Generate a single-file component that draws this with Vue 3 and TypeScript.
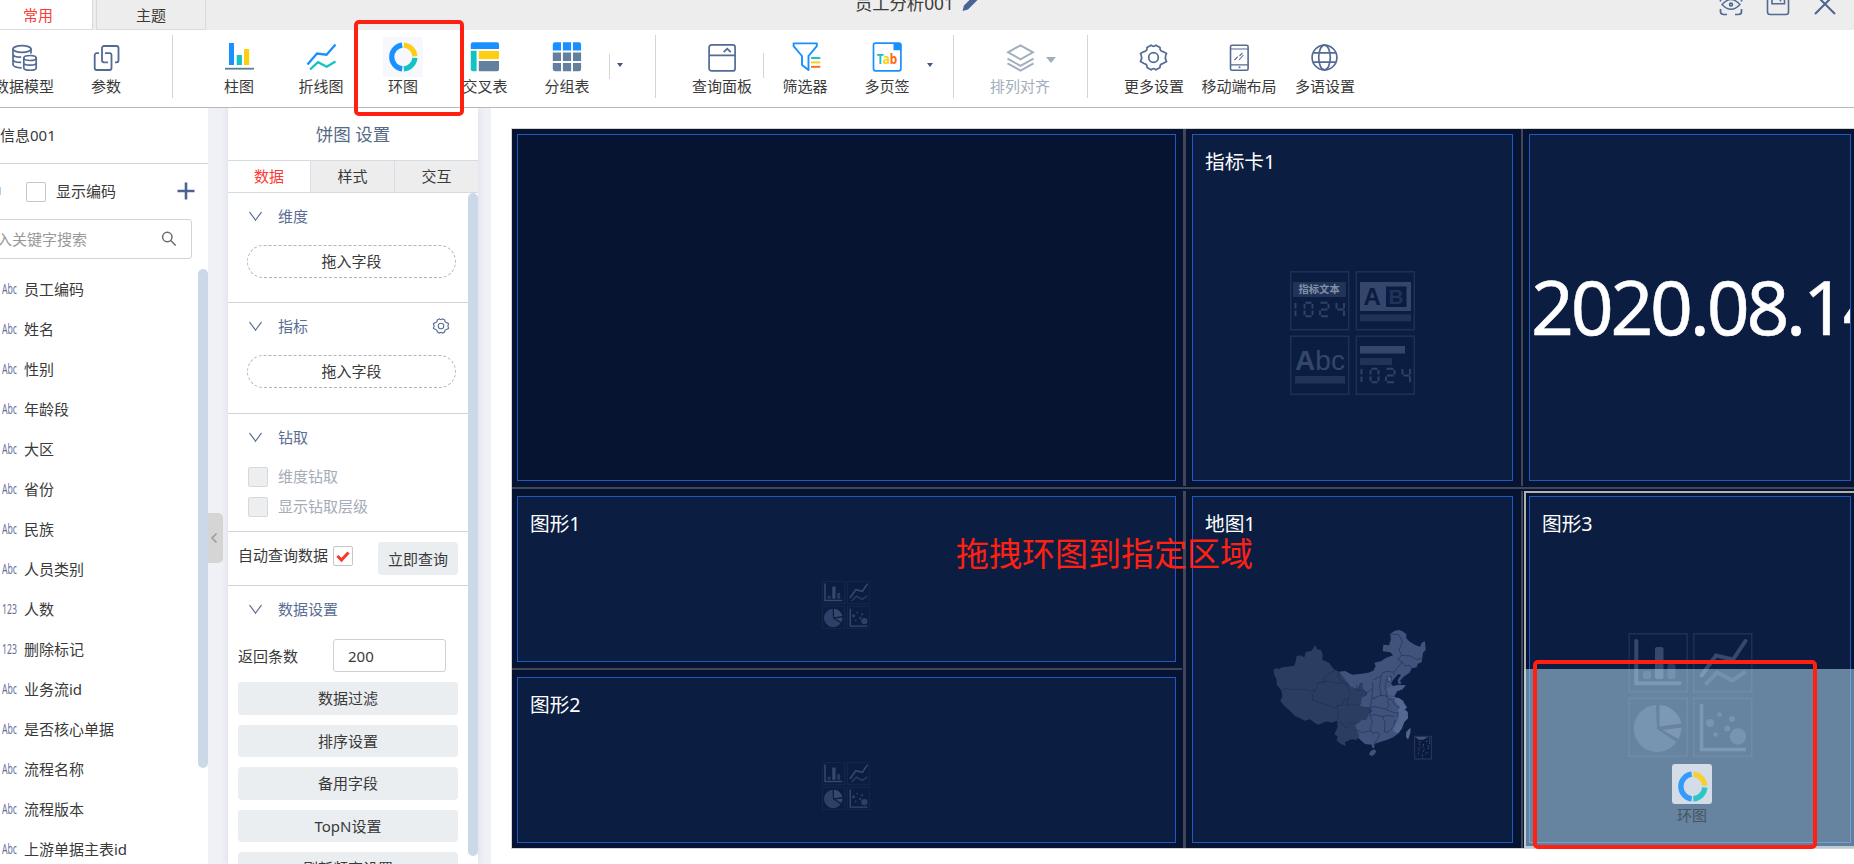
<script setup lang="ts">
import { ref } from 'vue'

interface Tool {
  icon: string
  label: string
  active?: boolean
  width?: string
}

const NAVY = '#526a94'

const donut = `
  <g fill="none" stroke-width="5.2">
    <path d="M14.2 3.1A12 12 0 0 0 14.2 26.9" stroke="#1890ff"/>
    <path d="M15.8 3.1A12 12 0 0 1 26.9 14.2" stroke="#fccf14"/>
    <path d="M26.9 15.9A12 12 0 0 1 15.8 26.9" stroke="#13c2c2"/>
  </g>`

const gear = `<path d="M12.1 3.2Q14.5 5.6 16.9 3.2L21 5.4Q20.6 9 23.9 9.6L27.6 11.4Q25.2 15.5 27.6 19.6L23.9 21.6Q20.6 22 21 25.6L16.9 27.8Q14.5 25.4 12.1 27.8L8 25.6Q8.4 22 5.1 21.6L1.4 19.6Q3.8 15.5 1.4 11.4L5.1 9.6Q8.4 9 8 5.4Z" stroke-linejoin="round"/><circle cx="14.5" cy="15.5" r="4.8"/>`

const icons: Record<string, string> = {
  database: `<g fill="none" stroke="${NAVY}" stroke-width="1.7" stroke-linecap="round">
    <ellipse cx="13" cy="7" rx="9" ry="3.3"/><path d="M4 7v15.500c0 1.500 3 3 8 3.300M4 12.200c0 1.600 3 2.800 7.500 3M4 17.400c0 1.600 3 2.800 7.500 3M22 7v4"/>
    <ellipse cx="21" cy="16" rx="6.200" ry="2.500"/><path d="M14.800 16v10c0 3 12.400 3 12.400 0V16M14.800 21c0 2.800 12.400 2.800 12.400 0"/></g>`,
  params: `<g fill="none" stroke="${NAVY}" stroke-width="1.8">
    <path d="M14.500 20.300h-1.500a2 2 0 0 1-2-2V6a2 2 0 0 1 2-2h12.500a2 2 0 0 1 2 2v12.300a2 2 0 0 1-2 2H24"/>
    <path d="M8 11.200H5.700a2 2 0 0 0-2 2V26a2 2 0 0 0 2 2H18.500a2 2 0 0 0 2-2V13.200a2 2 0 0 0-2-2H14M14.500 20.300h2.500"/></g>`,
  bar: `<path fill="#1890ff" d="M5 1h5v22H5z"/><path fill="#13c2c2" d="M12.700 13h5.200v10h-5.200z"/><path fill="#fccf14" d="M20 7h5.200v16H20z"/><path fill="#5b7c95" d="M1 25.800h29v1.800H1z"/>`,
  line: `<g fill="none" stroke-width="2.300"><path stroke="#1890ff" d="M1.500 22.500 11 11.500l9.500 1.200L29.500 2.500"/><path stroke="#13c2c2" d="M4 27.500 12 20.200l8.700 4.500 8.800-5.200"/></g>`,
  donut,
  cross: `<path fill="#1890ff" d="M3 .3h24q2 0 2 2V7H.8V2.300q0-2 2.200-2z"/><path fill="#13c2c2" d="M.8 8.800h5.800v20.500H2.800q-2 0-2-2z"/><path fill="#fccf14" d="M8.800 8.800H29v8.300H8.800z"/><path fill="#64809f" d="M8.800 19H29v8.300q0 2-2 2H8.800z"/>`,
  grid: `<g fill="#1890ff"><path d="M3 .3h6v8.300H.8V2.500q0-2.200 2.200-2.200zM10.900.3h8.200v8.300h-8.200zM21 .3h6q2.100 0 2.100 2.200v6.100H21z"/></g><path fill="#64809f" d="M.8 10.600H9v8.300H.8zM10.900 10.600h8.200v8.300h-8.200zM21 10.600h8.100v8.300H21zM.8 20.900H9v8.300H3q-2.200 0-2.200-2.200zM10.900 20.900h8.200v8.300h-8.200zM21 20.900h8.100V27q0 2.200-2.100 2.200h-6z"/>`,
  query: `<g fill="none" stroke="${NAVY}" stroke-width="1.700"><rect x="2.100" y="2.900" width="26" height="26" rx="2.500"/><path d="M2 13.300h26M16.700 10.200l3.500-3.600 3.500 3.600"/></g>`,
  filter: `<path fill="none" stroke="#1890ff" stroke-width="1.900" stroke-linejoin="round" d="M3.600 1.400h23.200v2.700L18.500 14v14L12 23V14L3.600 4.100z"/><g stroke-width="1.900"><path stroke="#13c2c2" d="M21 16h9.300"/><path stroke="#fccf14" d="M21 20.400h9.300"/><path stroke="#ff6a13" d="M21 24.800h9.300"/></g>`,
  tab: `<rect x="1.500" y="1.200" width="27.400" height="27.600" rx="2" fill="none" stroke="#1890ff" stroke-width="1.700"/><path fill="#1890ff" d="M21.500 1h6q1.800 0 1.800 1.800V8.200h-7.800z"/><text x="4.800" y="21.700" font-family="Noto Sans, sans-serif" font-size="13.500" font-weight="700" textLength="20.500" lengthAdjust="spacingAndGlyphs"><tspan fill="#13c2c2">T</tspan><tspan fill="#fccf14">a</tspan><tspan fill="#ff6a13">b</tspan></text>`,
  layers: `<g fill="none" stroke="#a3aebd" stroke-width="1.900"><path d="M15.500 3.300 28 10.300l-12.500 7L3 10.300z"/><path d="M2.500 16.600l13 7.300 13-7.300M2.500 21.300l13 7.300 13-7.300"/></g>`,
  gear: `<g fill="none" stroke="${NAVY}" stroke-width="1.700">${gear}</g>`,
  phone: `<g fill="none" stroke="${NAVY}" stroke-width="1.600"><rect x="6.500" y="3.300" width="17.600" height="24.900" rx="1.500"/><path d="M6.500 7h17.600M6.500 22.800h17.600" stroke-width="1.200"/><path d="M10.500 18l3.300-3.300M15.500 14l3-3.200M15 18l4.500-5" stroke-width="1.100"/><path d="M14.600 25.300h1.800"/></g>`,
  globe: `<g fill="none" stroke="${NAVY}" stroke-width="1.700"><circle cx="14.500" cy="15.500" r="12.400"/><ellipse cx="14.500" cy="15.500" rx="5.800" ry="12.400"/><path d="M3.500 10.800h22M3.500 20.200h22"/></g>`,
}

const dataTools: Tool[] = [
  { icon: 'database', label: '数据模型' },
  { icon: 'params', label: '参数' },
]
const chartTools: Tool[] = [
  { icon: 'bar', label: '柱图' },
  { icon: 'line', label: '折线图' },
  { icon: 'donut', label: '环图', active: true },
  { icon: 'cross', label: '交叉表' },
  { icon: 'grid', label: '分组表' },
]
const extraTools: Tool[] = [
  { icon: 'filter', label: '筛选器' },
  { icon: 'tab', label: '多页签' },
]
const settingTools: Tool[] = [
  { icon: 'gear', label: '更多设置' },
  { icon: 'phone', label: '移动端布局', width: '88px' },
  { icon: 'globe', label: '多语设置', width: '84px' },
]

const fields: [string, string][] = [
  ['Abc', '员工编码'], ['Abc', '姓名'], ['Abc', '性别'], ['Abc', '年龄段'], ['Abc', '大区'],
  ['Abc', '省份'], ['Abc', '民族'], ['Abc', '人员类别'], ['123', '人数'], ['123', '删除标记'],
  ['Abc', '业务流id'], ['Abc', '是否核心单据'], ['Abc', '流程名称'], ['Abc', '流程版本'], ['Abc', '上游单据主表id'],
]

const configTabs = ['数据', '样式', '交互']
const configTab = ref('数据')
const rowLimit = ref(200)
const dataButtons = ['数据过滤', '排序设置', '备用字段', 'TopN设置', '刷新频率设置']

/* Placeholder art: four 59px tiles on a 124px square */
const chartArt = `
  <g fill="none" stroke="#1f3058" stroke-width="1.500"><path d="M.7.700h58v58H.7zM65.300.700h58v58h-58zM.7 65.300h58v58H.7zM65.300 65.300h58v58h-58z"/></g>
  <g fill="none" stroke="#36486d" stroke-width="4" stroke-linecap="round"><path d="M7.800 8v42.300H51"/><path d="M73 42.500 87.500 22.500l17 4L117 8"/></g>
  <g fill="#283b62"><rect x="14.500" y="38" width="8" height="8" rx="2"/><rect x="39" y="31" width="8" height="15" rx="2"/></g>
  <rect x="26.500" y="14" width="8.500" height="32" rx="2" fill="#36486d"/>
  <path d="M77 51.500 88.500 39.500l15.500 8L117 38.500" fill="none" stroke="#283b62" stroke-width="4"/>
  <path fill="#2d4067" d="M27.500 72A23.500 23.500 0 1 0 48 109L28.500 96z"/>
  <path fill="#36486d" d="M31 72A23 23 0 0 1 52.800 90.500L31 93.500zM34 97 53 94.500a24 24 0 0 1-3 11.500z"/>
  <path fill="none" stroke="#36486d" stroke-width="3.600" d="M73 71v45.500h44.500"/>
  <g fill="#2d4067"><circle cx="81.500" cy="90" r="4"/><circle cx="91" cy="81.500" r="2.300"/><circle cx="103.500" cy="86" r="3"/><circle cx="98.800" cy="95.500" r="3"/><circle cx="87" cy="101.500" r="2.300"/><circle cx="109.500" cy="103.500" r="8.200"/></g>`

const lcd = (x: number, y: number) => `
  <path transform="translate(${x} ${y})" fill="none" stroke="#304267" stroke-width="1.900" d="M1 1v5.500M1 8.500V14M10 2v4.500M10 8.500V13M18 2v4.500M18 8.500V13M11 .8h6M11 14.200h6M26 .8h7M34 2v4.500M26.500 7.500h6.500M25.500 8.500V13M26.500 14.200h7M42 1v5.500M49.500 1v5.500M43 7.500h6M49.500 8.500V14"/>`

const cardArt = `
  <g fill="none" stroke="#1f3058" stroke-width="1.500"><path d="M.7.700h58v58H.7zM66.300.700h58v58h-58zM.7 65.300h58v58H.7zM66.300 65.300h58v58h-58z"/></g>
  <rect x="3" y="11" width="53" height="15" fill="#203358"/>
  <text x="8.500" y="22.300" font-size="10.300" font-weight="700" fill="#8490a8">指标文本</text>
  ${lcd(4.5, 31)}
  <rect x="70" y="11" width="51" height="29" fill="#34466b"/><rect x="96" y="15.500" width="20.500" height="20.500" fill="#0a1c40"/>
  <text x="73.500" y="33.500" font-family="Liberation Sans" font-size="24" font-weight="700" fill="#0a1c40">A</text>
  <text x="98.500" y="33" font-family="Liberation Sans" font-size="21" font-weight="700" fill="#203358">B</text>
  <rect x="70" y="43.300" width="51" height="7" fill="#203358"/>
  <text x="5" y="99" font-family="Liberation Sans" font-size="28" fill="#34466b" textLength="50" lengthAdjust="spacing"><tspan font-weight="700">A</tspan>bc</text>
  <rect x="5" y="105" width="50" height="7.500" fill="#203358"/>
  <rect x="70" y="75" width="45" height="7.500" fill="#34466b"/><rect x="70" y="87" width="32" height="7" fill="#203358"/>
  ${lcd(70.5, 97)}`
</script>

<template>
  <div class="designer">
    <header class="titlebar">
      <div class="tab tab-on">常用</div>
      <div class="tab tab-off">主题</div>
      <div class="doc-title">
        <span>员工分析001</span>
        <svg width="18" height="18" viewBox="0 0 18 18"><path d="M1.500 17 3 11.500 13 1.500l4 4L7 15.500z" fill="#4a6296" /></svg>
      </div>
      <div class="win-icons">
        <svg width="24" height="24" viewBox="0 0 24 24" fill="none" stroke="#526a94" stroke-width="1.700">
          <path d="M8 22.500H4.500Q1.500 22.500 1.500 19.500V17M16 22.500h3.500q3 0 3-3V17M1.500 9.500V7M22.500 9.500V7" />
          <path d="M3 12.500Q12 2.500 21 12.500 12 22 3 12.500z" stroke-width="1.400" /><circle cx="12" cy="12.500" r="1.400" />
        </svg>
        <svg width="24" height="24" viewBox="0 0 24 24" fill="none" stroke="#526a94" stroke-width="1.600">
          <rect x="1.500" y="1" width="21" height="21.500" rx="2.500" /><path d="M6 2v9.700h12.500V2M14.500 6v3.500" />
        </svg>
        <svg width="24" height="24" viewBox="0 0 24 24" fill="none" stroke="#4c6490" stroke-width="2"><path d="M2 2l20 20M22 2 2 22" /></svg>
      </div>
    </header>

    <nav class="toolbar">
      <div v-for="t in dataTools" :key="t.icon" class="tool">
        <svg viewBox="0 0 30 30" v-html="icons[t.icon]" /><span>{{ t.label }}</span>
      </div>
      <i class="rule" />
      <div v-for="t in chartTools" :key="t.icon" class="tool" :class="{ active: t.active }">
        <svg viewBox="0 0 30 30" v-html="icons[t.icon]" /><span>{{ t.label }}</span>
      </div>
      <i class="rule-sm" />
      <div class="more"><i class="caret" /></div>
      <i class="rule rule-after-more" />
      <div class="tool"><svg viewBox="0 0 30 30" v-html="icons.query" /><span>查询面板</span></div>
      <i class="rule-sm flush" />
      <div v-for="t in extraTools" :key="t.icon" class="tool">
        <svg viewBox="0 0 30 30" v-html="icons[t.icon]" /><span>{{ t.label }}</span>
      </div>
      <div class="more more-tight"><i class="caret" /></div>
      <i class="rule rule-after-more" />
      <div class="tool disabled">
        <svg viewBox="0 0 30 30" v-html="icons.layers" /><span>排列对齐</span><i class="caret-lg" />
      </div>
      <i class="rule rule-last" />
      <div v-for="t in settingTools" :key="t.icon" class="tool" :style="{ width: t.width }">
        <svg viewBox="0 0 30 30" v-html="icons[t.icon]" /><span>{{ t.label }}</span>
      </div>
    </nav>

    <main class="workspace">
      <aside class="fields">
        <div class="model-name">信息001</div>
        <div class="code-toggle">
          <i class="edge-mark" /><i class="check" /><span>显示编码</span>
          <svg width="18" height="18" viewBox="0 0 18 18"><path d="M9 .5v17M.5 9h17" stroke="#4c6490" stroke-width="2.600" /></svg>
        </div>
        <div class="search">
          <span>入关键字搜索</span>
          <svg width="16" height="16" viewBox="0 0 16 16" fill="none" stroke="#6b6b6b" stroke-width="1.500"><circle cx="6.300" cy="6" r="4.700" /><path d="M9.700 9.500l5 5" /></svg>
        </div>
        <div class="field-area">
          <ul>
            <li v-for="[kind, name] in fields" :key="name">
              <svg width="16" height="20" viewBox="0 0 16 20"><text x="0" y="15" textLength="15" lengthAdjust="spacingAndGlyphs">{{ kind }}</text></svg>
              <span>{{ name }}</span>
            </li>
          </ul>
          <i class="thumb fields-thumb" />
        </div>
      </aside>

      <div class="gutter">
        <div class="handle"><svg width="8" height="12" viewBox="0 0 8 12"><path d="M6.500 1.500 2 6l4.500 4.500" fill="none" stroke="#9a9a9a" stroke-width="1.500" /></svg></div>
      </div>

      <aside class="config">
        <h2>饼图 设置</h2>
        <div class="config-tabs">
          <button v-for="t in configTabs" :key="t" :class="{ on: t === configTab }" @click="configTab = t">{{ t }}</button>
        </div>
        <div class="config-body">
          <div class="config-list">
            <section class="drop-section">
              <h3><i class="chev" />维度</h3>
              <div class="pill">拖入字段</div>
            </section>
            <section class="drop-section measures">
              <h3><i class="chev" />指标
                <svg class="mini-gear" width="18" height="18" viewBox="-1 1 31 29"><g fill="none" stroke="#5f7397" stroke-width="2" v-html="gear" /></svg>
              </h3>
              <div class="pill">拖入字段</div>
            </section>
            <section class="drill">
              <h3><i class="chev" />钻取</h3>
              <div class="opt"><i class="check off" />维度钻取</div>
              <div class="opt"><i class="check off" />显示钻取层级</div>
            </section>
            <section class="auto">
              <span>自动查询数据</span>
              <i class="check"><svg width="18" height="18" viewBox="0 0 18 18"><path d="M3.500 9l4 4 7-7.500" fill="none" stroke="#f9352c" stroke-width="3" /></svg></i>
              <button>立即查询</button>
            </section>
            <section class="data-set">
              <h3><i class="chev" />数据设置</h3>
              <div class="limit"><span>返回条数</span><div class="input">{{ rowLimit }}</div></div>
              <button v-for="b in dataButtons" :key="b">{{ b }}</button>
            </section>
          </div>
          <i class="thumb config-thumb" />
        </div>
      </aside>

      <div class="gutter gutter-narrow" />

      <section class="stage">
        <div class="board">
          <div class="row row-top">
            <div class="cell wide"><div class="frame empty" /></div>
            <i class="vbar" />
            <div class="cell mid">
              <div class="frame"><h4>指标卡1</h4><svg class="art-card" viewBox="0 0 125 124" v-html="cardArt" /></div>
            </div>
            <i class="vbar thin" />
            <div class="cell last"><div class="frame clock">2020.08.14</div></div>
          </div>
          <i class="hbar" />
          <div class="row row-bottom">
            <div class="stack">
              <div class="cell wide"><div class="frame"><h4>图形1</h4><svg class="art-sm" viewBox="0 0 124 124" v-html="chartArt" /></div></div>
              <i class="hbar" />
              <div class="cell wide end"><div class="frame"><h4>图形2</h4><svg class="art-sm" viewBox="0 0 124 124" v-html="chartArt" /></div></div>
            </div>
            <i class="vbar low" />
            <div class="cell mid end">
              <div class="frame"><h4>地图1</h4>
                <svg class="map" viewBox="0 0 525 450">
                  <path fill="#2b3d61" d="M25 150 34 144 40 147 52 142 88 137 92 124 95 108 105 106 118 112 122 96 140 92 146 82 152 76 156 88 168 90 173 104 172 119 192 128 207 148 222 155 240 175 248 188 256 200 278 207 285 190 292 188 292 205 306 218 304 226 290 232 288 246 282 258 300 262 312 262 322 274 308 284 306 298 290 300 270 316 275 330 283 346 275 360 260 358 240 366 242 378 228 372 215 362 218 350 208 342 218 322 216 302 200 308 185 304 160 314 148 308 135 298 120 302 90 288 75 272 58 258 46 243 52 228 48 210 36 195 34 178 28 165z" />
                  <path fill="#40537a" d="M222 155 240 153 262 164 285 162 310 158 325 152 332 138 328 128 348 124 362 114 384 106 376 97 353 94 355 74 372 76 378 58 374 42 390 32 402 30 412 34 424 42 424 54 432 64 452 76 466 80 470 68 480 64 482 90 474 98 472 112 470 126 458 132 455 142 440 145 434 158 416 170 405 182 410 190 400 192 398 180 408 165 400 162 386 178 378 190 384 198 400 194 422 196 412 208 396 214 388 228 402 240 412 240 426 262 418 268 428 276 429 294 418 306 410 326 400 340 385 352 365 360 345 366 328 372 328 384 322 384 320 374 300 372 280 354 275 330 270 316 290 300 306 298 308 284 322 274 312 262 300 262 282 258 288 246 290 232 304 226 306 218 292 205 292 188 285 190 278 207 256 200 248 188z" />
                  <path fill="#4a5d84" d="M366 204 384 198 422 196 412 208 396 214 388 228 372 226 364 216z" />
                  <path fill="#536891" d="M378 232 402 234 414 242 418 252 426 264 418 268 428 276 429 294 418 306 410 326 400 340 386 336 384 322 398 302 400 288 398 272 404 262 392 246z" />
                  <path fill="#53678f" d="M366 170l6-4 4 8 4 4-2 8-8 0z" />
                  <path fill="#536891" d="M432 327 437 324 436 338 429 359 423 350 424 336z" />
                  <path fill="#40537a" d="M318 392 328 388 334 394 328 404 318 408 312 402z" />
                  <g fill="none" stroke="#1c2d54" stroke-width="1.800">
                    <path d="M48 210 60 206 90 209 118 208 138 213 152 210 160 188 180 186 178 172 192 160 210 152M152 210 142 225 142 240 170 250 190 256 208 266 216 256 220 284 216 302M160 188 186 184 216 190 236 188 248 200 256 218 252 232 236 242 232 256 216 256M222 155 220 172 240 188 256 200M252 232 244 256 262 252 276 258 290 250M218 306 232 310 244 326 254 308 270 310M275 194 276 210 290 212" />
                    <path d="M372 76 378 42 402 44 412 66 402 90 410 106 436 108 455 118 470 116M410 106 398 118 412 126 420 138 434 136 440 145M412 126 396 144 386 158 388 166M325 180 348 168 354 158 366 154 384 156M322 186 324 204 320 232 330 238M348 168 344 202 348 226 322 236M348 226 366 228 372 240 388 236M364 178 360 206 366 218 364 230M366 170l12-2 2 14-10 4zM320 236 316 262 330 260 364 268 372 272M366 240 372 256 364 268M388 236 384 248 396 260 404 262M372 272 392 280 400 276M316 262 314 286 330 284 352 290 368 286 388 290M314 286 322 306 316 326 322 340 338 336 344 346M352 290 360 308 358 336 370 336 384 322M275 330 292 338 318 332M344 346 336 358 328 372M390 300 386 322M400 276 398 292M322 206 300 222M282 350 278 338" />
                  </g>
                  <rect x="449" y="349" width="50" height="68" fill="#0a1b3f" stroke="#283a60" stroke-width="3" />
                  <path d="M451 351h38l-14 8-14 0z" fill="#40537a" />
                  <path d="M494 354v18M490 376v14M464 364v12M462 382v10M460 398v8M476 372l-2 10M478 388l-4 8M472 404l2 8M486 362l-2 6M486 396l-4 8" stroke="#40537a" stroke-width="3" stroke-dasharray="4 3" />
                </svg>
              </div>
            </div>
            <i class="vbar thin low" />
            <div class="cell last end selected">
              <div class="frame"><h4>图形3</h4><svg class="art-card" viewBox="0 0 124 124" v-html="chartArt" /></div>
              <div class="drop-zone" />
              <div class="ghost">
                <div class="ghost-icon"><svg width="31" height="31" viewBox="0 0 30 30" v-html="icons.donut" /></div>
                <span>环图</span>
              </div>
            </div>
          </div>
        </div>
      </section>
    </main>

    <div class="mark mark-tool" />
    <div class="mark mark-drop" />
    <div class="mark-text">拖拽环图到指定区域</div>
  </div>
</template>

<style>
body { margin: 0; overflow: hidden; }
</style>

<style scoped>
.designer {
  position: relative;
  width: 1854px;
  height: 864px;
  overflow: hidden;
  background: #fff;
  color: #3a3a3a;
  font: 400 15px/20px "Noto Sans", "Noto Sans CJK SC", sans-serif;
  display: flex;
  flex-direction: column;
}
.designer * { box-sizing: border-box; }
svg { display: block; flex: none; }
i { display: block; flex: none; }
button { font: inherit; color: inherit; border: 0; padding: 0; display: block; }
h2, h3, h4, ul { margin: 0; padding: 0; font-weight: inherit; list-style: none; }

/* title bar */
.titlebar { height: 30px; flex: none; background: #ededed; display: flex; }
.tab { height: 30px; line-height: 30px; text-align: center; border-right: 1px solid #d9d9d9; border-bottom: 1px solid #dcdcdc; }
.tab-on { width: 93px; padding-right: 16px; background: #fff; color: #fa3b36; }
.tab-off { width: 110px; margin-left: 3px; border-left: 1px solid #d9d9d9; }
.doc-title { display: flex; margin-left: 649px; margin-top: -7px; font-size: 17.300px; line-height: 21px; width: 124px; gap: 7px; white-space: nowrap; }
.doc-title svg { margin-top: 1px; }
.win-icons { display: flex; margin-left: auto; margin-right: 17px; margin-top: -8px; gap: 23px; }

/* toolbar */
.toolbar { height: 78px; flex: none; display: flex; border-bottom: 1px solid #b9b9b9; padding-top: 12px; margin-left: -17px; background: #fff; }
.tool { position: relative; width: 82px; flex: none; display: flex; flex-direction: column; align-items: center; white-space: nowrap; }
.tool svg { width: 30px; height: 30px; margin-bottom: 4px; overflow: visible; }
.tool.active svg { background: #f6f8fd; box-shadow: 0 0 0 5px #f6f8fd; }
.tool.disabled { color: #a3aebd; }
.rule { width: 1px; height: 63px; margin: -7px 25px 0; background: #d4d4d4; }
.rule-sm { width: 1px; height: 25px; margin: 12px 0 0 1px; background: #d4d4d4; }
.rule-sm.flush { margin: 11px 0 0; }
.more { width: 45px; padding: 21px 0 0 6.500px; flex: none; }
.more-tight { width: 25px; padding-left: 0; margin-left: -1px; margin-right: 1px; }
.rule-after-more { margin-left: 0; }
.rule-last { margin-left: 26px; }
.caret { border: 3.500px solid transparent; border-top: 4px solid #3f5880; border-bottom: 0; width: 0; height: 0; }
.caret-lg { position: absolute; left: 67px; top: 15px; border: 5.500px solid transparent; border-top: 6px solid #a3aebd; border-bottom: 0; }

/* workspace */
.workspace { flex: 1; min-height: 0; display: flex; }
.fields { width: 208px; flex: none; display: flex; flex-direction: column; }
.model-name { height: 56px; line-height: 54px; border-bottom: 1px solid #d6d6d6; }
.code-toggle { height: 55px; padding-bottom: 2px; display: flex; align-items: center; }
.edge-mark { width: 1px; height: 8px; background: #a9d3f5; }
.check { width: 20px; height: 20px; border: 1px solid #c6c6c6; border-radius: 2px; background: #fff; }
.code-toggle .check { margin: 3px 10px 0 25px; }
.code-toggle svg { margin-left: auto; margin-right: 13px; }
.search { width: 196px; height: 40px; margin-left: -4px; border: 1px solid #d3d3d3; border-radius: 3px; display: flex; align-items: center; justify-content: space-between; padding-right: 14px; color: #999; }
.field-area { display: flex; margin-top: 10px; height: 595px; }
.field-area ul { flex: 1; }
.field-area li { height: 40px; display: flex; align-items: center; padding-left: 2px; gap: 6px; white-space: nowrap; }
.field-area text { font-size: 13.500px; fill: #637299; }
.thumb { width: 10px; border-radius: 5px; background: #cbd8e7; }
.fields-thumb { height: 499px; }

.gutter { width: 20px; flex: none; background: #eff1f6; }
.gutter-narrow { width: 13px; }
.handle { width: 15px; height: 50px; margin-top: 405px; border-radius: 0 5px 5px 0; background: #d5d5d5; display: flex; align-items: center; justify-content: flex-start; padding: 0 0 0 2px; }

/* config panel */
.config { width: 250px; flex: none; background: #fff; box-shadow: 0 0 7px rgba(60, 70, 90, .13); display: flex; flex-direction: column; position: relative; clip-path: inset(0 -8px 0 -8px); }
.config h2 { height: 52px; line-height: 52px; text-align: center; font-size: 17.500px; color: #566a84; }
.config-tabs { height: 33px; flex: none; display: flex; border-top: 1px solid #d5dbe4; border-bottom: 1px solid #d5dbe4; }
.config-tabs button { width: 84px; padding-bottom: 1px; background: #ededee; border-left: 1px solid #d8dde6; line-height: 29px; }
.config-tabs button.on { width: 82px; background: #fff; color: #fa3b36; border-left: 0; }
.config-body { flex: 1; min-height: 0; display: flex; }
.config-thumb { height: 663px; }
.config-list { width: 240px; }
.config-list section { border-bottom: 1px solid #d3d3d3; }
h3 { height: 20px; font-size: 15px; color: #5a6e94; display: flex; align-items: center; padding-left: 21px; }
.chev { width: 9px; height: 9px; border: solid #54698f; border-width: 0 1.500px 1.500px 0; transform: translate(2px, -4px) scaleY(1.35) rotate(45deg); margin-right: 20px; }
.mini-gear { margin-left: auto; margin-right: 18px; }
.drop-section { height: 110px; padding-top: 13px; }
.drop-section.measures { height: 111px; }
.pill { width: 209px; height: 33px; margin: 19px 0 0 19px; border: 1px dashed #a9b7c9; border-radius: 17px; text-align: center; line-height: 30px; }
.drill { height: 118px; padding-top: 13px; }
.drill h3 { margin-bottom: 15px; }
.opt { height: 30px; padding-bottom: 2px; display: flex; align-items: center; padding-left: 20px; gap: 10px; color: #a5acb8; }
.opt .check { margin-top: 2px; }
.check.off { background: #eceef0; border-color: #d6d8da; }
.auto { height: 54px; display: flex; padding: 10px 10px 0 10px; }
.auto span { margin-top: 3px; }
.auto .check { margin: 4px auto 0 5px; }
.auto button { width: 80px; height: 33px; line-height: 34px; }
.config-list button { background: #eaeef1; border-radius: 4px; text-align: center; }
.data-set { padding: 13px 10px 0; }
.data-set h3 { padding-left: 11px; margin-bottom: 20px; }
.limit { display: flex; align-items: center; justify-content: space-between; height: 33px; padding-right: 12px; margin-bottom: 10px; }
.input { width: 113px; height: 33px; line-height: 32px; border: 1px solid #d0d0d0; border-radius: 3px; padding-left: 14px; }
.data-set button { width: 220px; height: 32.500px; line-height: 32px; margin-bottom: 10px; }

/* dashboard */
.stage { flex: 1; min-width: 0; padding: 20px 0 0 20px; background: #fff; overflow: hidden; }
.board { width: 1343px; height: 721px; border: 1px solid #d5d5d5; border-right: 0; background: #061432; color: #fff; display: flex; flex-direction: column; }
.row { display: flex; }
.row-top { height: 358px; }
.row-bottom { height: 359px; }
.stack { width: 671px; display: flex; flex-direction: column; }
.vbar { width: 3px; background: #40475a; margin-bottom: 1px; }
.vbar.thin { width: 2px; }
.vbar.low { margin: 2px 0 0; }
.hbar { height: 2px; background: #40475a; }
.stack .hbar { margin-right: 1px; }
.cell { display: flex; padding: 5px 7px 6px 5px; }
.cell.wide { width: 671px; }
.cell.mid { width: 335px; padding-left: 6px; padding-right: 8px; }
.cell.last { width: 331px; padding-left: 6px; padding-right: 3px; }
.row-bottom .cell { padding-top: 7px; }
.row-bottom .end { padding-bottom: 5px; }
.stack .cell { height: 179px; }
.stack .cell.end { height: 178px; }
.frame { flex: 1; min-width: 0; border: 1px solid #2058c4; background: #0b1e42; display: flex; flex-direction: column; overflow: hidden; }
.frame.empty { background: #061331; }
h4 { height: 51px; flex: none; line-height: 54px; padding-left: 12px; font-size: 19.700px; }
.art-card { width: 125px; height: 124px; margin: auto; }
.art-sm { width: 48px; height: 48px; margin: auto; }
.stack .frame { padding-right: 2px; }
.map { width: 175px; height: 150px; margin: auto; }
.art-card, .art-sm { font-family: "Noto Sans CJK SC", sans-serif; }
.clock { font-size: 75px; line-height: 343px; letter-spacing: -3.200px; white-space: nowrap; padding-left: 1px; -webkit-text-stroke: .5px #fff; }
.selected { position: relative; }
.selected::before { content: ""; position: absolute; left: 1px; top: 2px; right: -3px; bottom: 0; border: 2px solid #b2b2b2; }
.drop-zone { position: absolute; left: 1px; right: 0; top: 180px; bottom: 0; background: rgba(193, 232, 252, .5); }
.ghost { position: absolute; left: 149px; top: 275px; width: 40px; display: flex; flex-direction: column; align-items: center; color: #4a5562; white-space: nowrap; }
.ghost-icon { width: 40px; height: 40px; border-radius: 3px; background: #d4dce7; display: flex; align-items: center; justify-content: center; padding-top: 4px; margin-bottom: 1px; }
.ghost-icon svg { opacity: .85; }

/* annotations over the workspace */
.mark { position: absolute; border: 4px solid #ff2012; border-radius: 5px; }
.mark-tool { left: 354px; top: 20px; width: 110px; height: 96px; }
.mark-drop { left: 1533px; top: 660px; width: 284px; height: 189px; }
.mark-text { position: absolute; left: 956px; top: 534px; font-size: 33px; line-height: 40px; color: #ff2012; white-space: nowrap; }
</style>
